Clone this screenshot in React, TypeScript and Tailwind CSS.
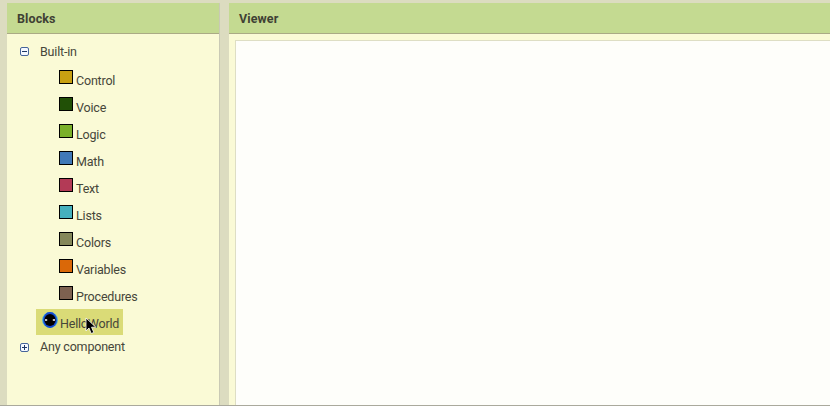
const items = [
  { name: "Control", color: "bg-[#c8a012]" },
  { name: "Voice", color: "bg-[#215006]" },
  { name: "Logic", color: "bg-[#7ab02a]" },
  { name: "Math", color: "bg-[#4079b8]" },
  { name: "Text", color: "bg-[#b33a56]" },
  { name: "Lists", color: "bg-[#45b0bd]" },
  { name: "Colors", color: "bg-[#85885a]" },
  { name: "Variables", color: "bg-[#da6808]" },
  { name: "Procedures", color: "bg-[#7d6150]" },
];

function Toggle({ open }: { open: boolean }) {
  return (
    <svg width="9" height="9" viewBox="0 0 9 9" className="shrink-0">
      <rect x="0.5" y="0.5" width="8" height="8" rx="1.5" fill="#f4f8ff" stroke="#45649a" />
      <path d={open ? "M2 4.5h5" : "M2 4.5h5M4.5 2v5"} stroke="#1d3766" fill="none" />
    </svg>
  );
}

function ScreenIcon() {
  return (
    <svg width="16" height="16" viewBox="0 0 16 16" className="shrink-0">
      <circle cx="8" cy="8" r="7.9" fill="#3ca9df" />
      <ellipse cx="8" cy="8" rx="6.9" ry="7.9" fill="#1648cf" />
      <ellipse cx="8" cy="8" rx="5.6" ry="6" fill="#000" />
      <path d="M3 8h2.2M10.8 8h2.2" stroke="#fff" strokeWidth="1.4" />
    </svg>
  );
}

function Pointer() {
  return (
    <svg width="12" height="18" viewBox="0 0 12 18" className="absolute left-[49px] top-[8px]">
      <path d="M1 1v13l3-3 2.2 5.5 2.6-1.1-2.3-5.2h4.3z" fill="#000" stroke="#fff" strokeWidth="0.8" />
    </svg>
  );
}

export default function App() {
  return (
    <div className="flex h-[406px] w-[830px] overflow-hidden border-b border-[#aaa99c] bg-[#dcdcc0] pt-[3px] font-[Roboto,sans-serif] text-[12.5px] tracking-[-0.19px] text-[#46463a]">
      <aside className="ml-[7px] w-[213px] shrink-0 border-r border-[#c9c9b5] bg-[#fafad6]">
        <h2 className="flex h-[31px] items-center border-b border-[#aaaa85] bg-[#c4da91] pl-[10px] pt-[2px] text-[12.5px] font-bold tracking-[0.1px] text-[#3f4134]">Blocks</h2>
        <div className="flex h-[33px] items-center gap-[11px] pl-[13px] pt-[2px]">
          <Toggle open />
          <span className="pt-[2px]">Built-in</span>
        </div>
        <ul>
          {items.map((item) => (
            <li key={item.name} className="flex h-[27px] gap-[3px] pl-[52px]">
              <span className={`mt-[3px] size-[14px] border border-black ${item.color}`} />
              <span className="pt-[4px] leading-[19px]">{item.name}</span>
            </li>
          ))}
        </ul>
        <div className="relative -mt-px ml-[29px] flex h-[26px] w-[87px] gap-[2px] bg-[#dadb77] pl-[6px]">
          <span className="pt-[3px]"><ScreenIcon /></span>
          <span className="pt-[5px] leading-[19px]">HelloWorld</span>
          <Pointer />
        </div>
        <div className="flex h-[24px] items-center gap-[11px] pl-[13px]">
          <Toggle open={false} />
          <span>Any component</span>
        </div>
      </aside>
      <main className="ml-[9px] flex min-w-0 flex-1 flex-col bg-[#fafad6]">
        <h2 className="flex h-[31px] shrink-0 items-center border-b border-[#aaaa85] bg-[#c4da91] pl-[10px] pt-[2px] text-[12.5px] font-bold tracking-[0.1px] text-[#3f4134]">Viewer</h2>
        <div className="ml-[6px] mt-[6px] flex-1 border-l border-t border-[#dedec4] bg-[#fefefa]" />
      </main>
    </div>
  );
}
